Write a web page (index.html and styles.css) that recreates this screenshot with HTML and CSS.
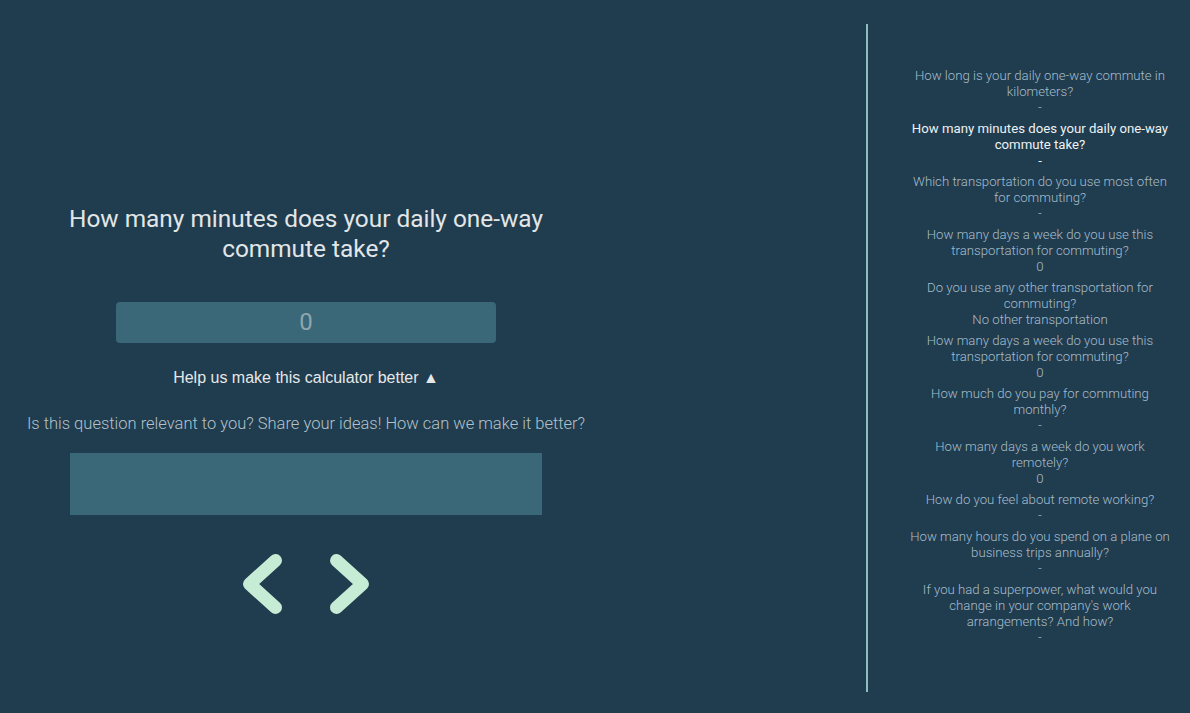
FILE: index.html
```html
<!DOCTYPE html>
<html>
<head>
<meta charset="utf-8">
<link rel="stylesheet" href="styles.css">
</head>
<body>
<div class="page">
  <main class="main">
    <h1 class="question">How many minutes does your daily one-way commute take?</h1>
    <div class="answer">0</div>
    <div class="help">Help us make this calculator better ▲</div>
    <p class="prompt">Is this question relevant to you? Share your ideas! How can we make it better?</p>
    <div class="feedback"></div>
    <div class="nav">
      <svg class="chev" width="50" height="66" viewBox="0 0 50 66"><polyline points="38.5,9.5 12.5,33 38.5,56.5" fill="none" stroke="#c6ecd6" stroke-width="13" stroke-linecap="round" stroke-linejoin="round"/></svg>
      <svg class="chev" width="50" height="66" viewBox="0 0 50 66"><polyline points="11.5,9.5 37.5,33 11.5,56.5" fill="none" stroke="#c6ecd6" stroke-width="13" stroke-linecap="round" stroke-linejoin="round"/></svg>
    </div>
  </main>
  <aside class="side">
    <div class="item"><div>How long is your daily one-way commute in kilometers?</div><div>-</div></div>
    <div class="item active"><div>How many minutes does your daily one-way commute take?</div><div>-</div></div>
    <div class="item"><div>Which transportation do you use most often for commuting?</div><div>-</div></div>
    <div class="item"><div>How many days a week do you use this transportation for commuting?</div><div>0</div></div>
    <div class="item"><div>Do you use any other transportation for commuting?</div><div>No other transportation</div></div>
    <div class="item"><div>How many days a week do you use this transportation for commuting?</div><div>0</div></div>
    <div class="item"><div>How much do you pay for commuting monthly?</div><div>-</div></div>
    <div class="item"><div>How many days a week do you work remotely?</div><div>0</div></div>
    <div class="item"><div>How do you feel about remote working?</div><div>-</div></div>
    <div class="item"><div>How many hours do you spend on a plane on business trips annually?</div><div>-</div></div>
    <div class="item"><div>If you had a superpower, what would you change in your company's work arrangements? And how?</div><div>-</div></div>
  </aside>
</div>
</body>
</html>
```

FILE: styles.css
```css
html, body {
  margin: 0;
  padding: 0;
  background: #203c4f;
  height: 100%;
}
body {
  font-family: Roboto, "Liberation Sans", sans-serif;
  font-weight: 300;
}
.page {
  display: flex;
  height: 713px;
  overflow: hidden;
}
.main {
  width: 612px;
  display: flex;
  flex-direction: column;
  align-items: center;
  padding-top: 204px;
  box-sizing: border-box;
}
.question {
  margin: 0;
  width: 500px;
  font-size: 24.4px;
  line-height: 30px;
  font-weight: 400;
  color: #e2e6e7;
  text-align: center;
}
.answer {
  margin-top: 38px;
  width: 380px;
  height: 41px;
  border-radius: 4px;
  background: #3a6879;
  color: #8ea6ae;
  font-size: 24px;
  font-weight: 400;
  line-height: 41px;
  text-align: center;
}
.help {
  margin-top: 25px;
  font-family: "Liberation Sans", Arial, sans-serif;
  font-weight: 400;
  font-size: 16px;
  line-height: 20px;
  color: #e6e8e8;
}
.prompt {
  margin: 26px 0 0;
  font-size: 16.5px;
  line-height: 20px;
  color: #b3c2c9;
  white-space: nowrap;
}
.feedback {
  margin-top: 19px;
  width: 472px;
  height: 62px;
  background: #3a6879;
}
.nav {
  margin-top: 36px;
  display: flex;
  gap: 38px;
}
.chev {
  display: block;
}
.side {
  margin-left: auto;
  margin-top: 24px;
  height: 668px;
  width: 324px;
  box-sizing: border-box;
  border-left: 2px solid #8dbdbd;
  padding: 44px 20px 0 42px;
  display: flex;
  flex-direction: column;
  gap: 5px;
}
.item {
  text-align: center;
  font-size: 13.2px;
  line-height: 16px;
  color: #a6bccb;
}
.item.active {
  color: #eef2f3;
  font-weight: 400;
}
```
